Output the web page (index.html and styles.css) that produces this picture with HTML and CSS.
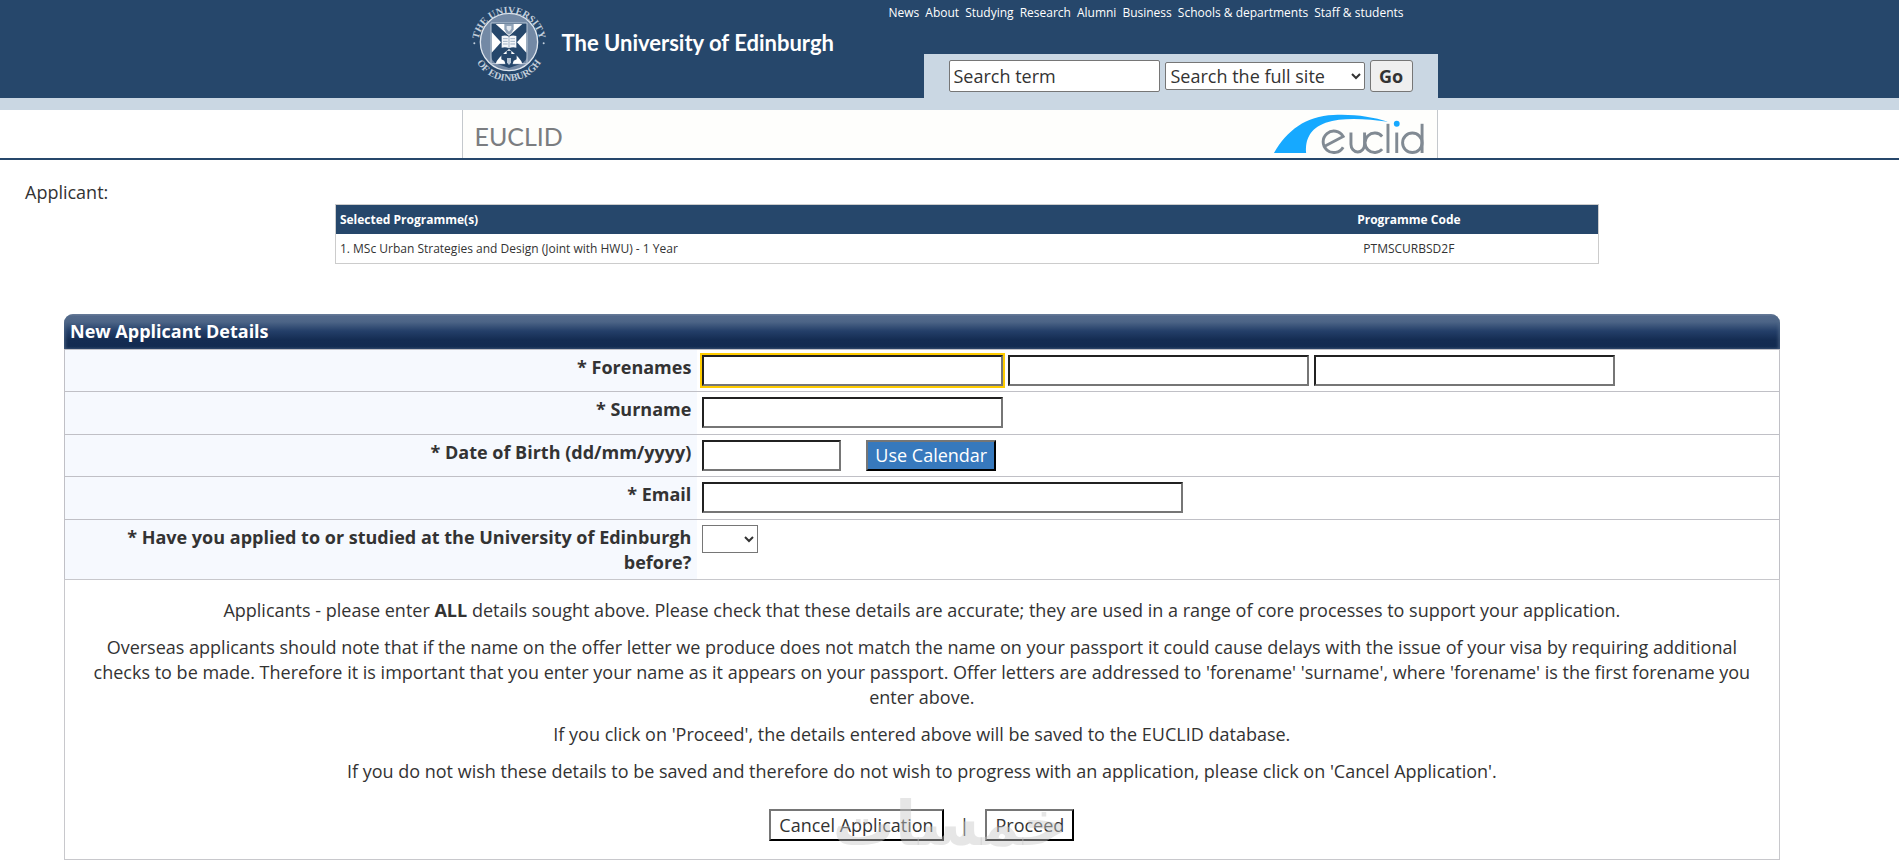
FILE: index.html
```html
<!DOCTYPE html>
<html lang="en">
<head>
    <meta charset="UTF-8">
    <meta name="viewport" content="width=device-width, initial-scale=1.0">
    <title>EUCLID - New Applicant Details</title>
    <link rel="stylesheet" href="styles.css">
</head>
<body>
    <header class="masthead">
        <div class="wrap masthead-inner">
            <a class="brand" href="#">
                <svg class="crest" viewBox="0 0 240 240" role="img" aria-label="University crest">
                    <defs>
                        <path id="ring-top" d="M 28 126 A 92 92 0 1 1 212 126"/>
                        <path id="ring-bottom" d="M 9 126 A 111 111 0 0 0 231 126"/>
                    </defs>
                    <circle cx="120" cy="120" r="86" fill="#7389a5" stroke="#dfe6ee" stroke-width="4"/>
                    <path d="M66 63h108v95q0 20-18 27l-36 13-36-13q-18-7-18-27z" fill="#26476b"/>
                    <path d="M66 63h108M66 63v122M174 63v122M66 185h108" stroke="#b9c7d6" stroke-width="3" fill="none"/>
                    <path d="M80 66h80l-40 36z" fill="#fff"/>
                    <path d="M68 90v62l28-31z" fill="#fff"/>
                    <path d="M172 90v62l-28-31z" fill="#fff"/>
                    <path d="M80 185q4-16 40-44 36 28 40 44z" fill="#fff"/>
                    <path d="M106 66h28v16q-4 12-14 16-10-4-14-16z" fill="#8fa2b8"/>
                    <path d="M113 72h14v9l-7 8-7-8z" fill="#dfe6ee"/>
                    <path d="M98 102q12-4 22 2 10-6 22-2v35q-12-4-22 2-10-6-22-2z" fill="#f4f6f9"/>
                    <path d="M102 110h14M102 118h14M102 126h14M124 110h14M124 118h14M124 126h14M120 104v34" stroke="#9fb0c3" stroke-width="3"/>
                    <path d="M113 146h14v10h16v16l-9 4-5 16h-18l-5-16-9-4v-16h16z" fill="#26476b"/>
                    <path d="M114 168h12v14l-6 7-6-7z" fill="#b9c7d6"/>
                    <circle cx="16" cy="124" r="3" fill="#c3cfdc"/>
                    <circle cx="224" cy="124" r="3" fill="#c3cfdc"/>
                    <text class="crest-text" text-anchor="middle"><textPath href="#ring-top" startOffset="50%">THE UNIVERSITY</textPath></text>
                    <text class="crest-text" text-anchor="middle"><textPath href="#ring-bottom" startOffset="50%">OF EDINBURGH</textPath></text>
                </svg>
                <span class="brand-name">The University of Edinburgh</span>
            </a>
            <div class="masthead-side">
                <nav class="top-nav" aria-label="University">
                    <a href="#">News</a>
                    <a href="#">About</a>
                    <a href="#">Studying</a>
                    <a href="#">Research</a>
                    <a href="#">Alumni</a>
                    <a href="#">Business</a>
                    <a href="#">Schools &amp; departments</a>
                    <a href="#">Staff &amp; students</a>
                </nav>
                <form class="search">
                    <input class="search-term" type="text" value="Search term" aria-label="Search term">
                    <select class="search-scope" aria-label="Search scope">
                        <option>Search the full site</option>
                    </select>
                    <button class="search-go" type="button">Go</button>
                </form>
            </div>
        </div>
    </header>

    <div class="site-bar">
        <div class="wrap site-bar-inner">
            <h1 class="site-title">EUCLID</h1>
            <svg class="euclid-logo" viewBox="0 0 156 42" role="img" aria-label="euclid">
                <path d="M1 40C14 17 34 2 62 1C84 0 102 3 118 8C96 5 72 3 54 9C38 15 33 26 34 40Z" fill="#16a9ff"/>
                <g fill="none" stroke="#818a93" stroke-width="3">
                    <path d="M53 33L72 23A11 11 0 1 0 72 34"/>
                    <path d="M80 19V31A7 8 0 0 0 94 31V19"/>
                    <path d="M112 23A10 10 0 1 0 112 36"/>
                    <path d="M118 10V40"/>
                    <path d="M127 19V40"/>
                    <circle cx="143" cy="29.500" r="10"/>
                    <path d="M153 10V40"/>
                </g>
                <circle cx="127" cy="10" r="3" fill="#16a9ff"/>
            </svg>
        </div>
    </div>

    <main class="content">
        <p class="applicant">Applicant:</p>

        <div class="panel">
            <table class="programmes">
                <thead>
                    <tr>
                        <th class="programme-name">Selected Programme(s)</th>
                        <th class="programme-code">Programme Code</th>
                    </tr>
                </thead>
                <tbody>
                    <tr>
                        <td class="programme-name">1. MSc Urban Strategies and Design (Joint with HWU) - 1 Year</td>
                        <td class="programme-code">PTMSCURBSD2F</td>
                    </tr>
                </tbody>
            </table>

            <form class="details">
                <h2 class="details-title">New Applicant Details</h2>
                <div class="row">
                    <label class="row-label" for="forename1">* Forenames</label>
                    <div class="row-fields">
                        <input class="field focused" type="text" id="forename1">
                        <input class="field" type="text" aria-label="Second forename">
                        <input class="field" type="text" aria-label="Third forename">
                    </div>
                </div>
                <div class="row">
                    <label class="row-label" for="surname">* Surname</label>
                    <div class="row-fields">
                        <input class="field" type="text" id="surname">
                    </div>
                </div>
                <div class="row">
                    <label class="row-label" for="dob">* Date of Birth (dd/mm/yyyy)</label>
                    <div class="row-fields">
                        <input class="field field-date" type="text" id="dob">
                        <button class="calendar" type="button">Use Calendar</button>
                    </div>
                </div>
                <div class="row">
                    <label class="row-label" for="email">* Email</label>
                    <div class="row-fields">
                        <input class="field field-email" type="text" id="email">
                    </div>
                </div>
                <div class="row">
                    <label class="row-label" for="before">* Have you applied to or studied at the University of Edinburgh before?</label>
                    <div class="row-fields">
                        <select class="before" id="before">
                            <option></option>
                            <option>Yes</option>
                            <option>No</option>
                        </select>
                    </div>
                </div>

                <div class="notes">
                    <p>Applicants - please enter <b>ALL</b> details sought above. Please check that these details are accurate; they are used in a range of core processes to support your application.</p>
                    <p>Overseas applicants should note that if the name on the offer letter we produce does not match the name on your passport it could cause delays with the issue of your visa by requiring additional checks to be made. Therefore it is important that you enter your name as it appears on your passport. Offer letters are addressed to 'forename' 'surname', where 'forename' is the first forename you enter above.</p>
                    <p>If you click on 'Proceed', the details entered above will be saved to the EUCLID database.</p>
                    <p>If you do not wish these details to be saved and therefore do not wish to progress with an application, please click on 'Cancel Application'.</p>
                    <div class="actions">
                        <button class="action" type="button">Cancel Application</button>
                        <span>|</span>
                        <button class="action" type="button">Proceed</button>
                        <span class="watermark" lang="ar" dir="rtl">خمسات</span>
                    </div>
                </div>
            </form>
        </div>
    </main>
</body>
</html>
```

FILE: styles.css
```css
/* General Styles */
* {
    box-sizing: border-box;
}

body {
    margin: 0;
    background: #ffffff;
    color: #333333;
    font-family: 'Open Sans', 'Noto Sans', sans-serif;
    font-size: 18px;
    line-height: 25px;
}

input,
select,
button {
    font: inherit;
    color: inherit;
    margin: 0;
}

.wrap {
    width: 100%;
    max-width: 976px;
    margin: 0 auto;
}

/* Masthead */
.masthead {
    background: #26476b;
    border-bottom: 12px solid #cad7e3;
}

.masthead-inner {
    display: flex;
    justify-content: space-between;
    min-height: 98px;
}

.brand {
    display: flex;
    align-items: center;
    align-self: flex-start;
    gap: 13px;
    padding: 2px 0 0 7px;
    color: #ffffff;
    text-decoration: none;
}

.crest {
    width: 80px;
    height: 80px;
}

.crest-text {
    fill: #c3cfdc;
    font-family: 'Liberation Serif', serif;
    font-size: 30px;
    font-weight: bold;
}

.brand-name {
    font-family: 'Lato', sans-serif;
    font-size: 22px;
    font-weight: bold;
}

.masthead-side {
    display: flex;
    flex-direction: column;
    justify-content: space-between;
    align-items: flex-end;
}

.top-nav {
    display: flex;
    gap: 6px;
    padding: 4px 34px 0 0;
    font-size: 12px;
    line-height: 18px;
}

.top-nav a {
    color: #ffffff;
    text-decoration: none;
}

/* Search */
.search {
    display: flex;
    align-items: center;
    gap: 5px;
    padding: 0 25px;
    height: 44px;
    background: #cad7e3;
}

.search-term {
    width: 211px;
    height: 32px;
    padding: 0 4px;
    border: 1px solid #767676;
    border-radius: 2px;
}

.search-scope {
    width: 200px;
    height: 28px;
    padding: 0 1px;
    background-color: #ffffff;
    border: 1px solid #767676;
    border-radius: 2px;
}

.search-go {
    width: 43px;
    height: 32px;
    padding: 0;
    font-weight: bold;
    background: #efefef;
    border: 1px solid #767676;
    border-radius: 3px;
}

/* Site bar */
.site-bar {
    border-bottom: 2px solid #26476b;
}

.site-bar-inner {
    display: flex;
    justify-content: space-between;
    align-items: center;
    height: 48px;
    padding: 0 12px;
    background: #fefefc;
    border-left: 1px solid #c4c8cc;
    border-right: 1px solid #c4c8cc;
}

.site-title {
    margin: 4px 0 0;
    color: #7b7d80;
    font-family: 'Lato', sans-serif;
    font-size: 25px;
    font-weight: normal;
    line-height: 32px;
}

.euclid-logo {
    width: 152px;
    height: 41px;
}

/* Page content */
.content {
    padding: 20px 29px 6px 25px;
}

.applicant {
    margin: 0;
}

.panel {
    margin: -1px 0 0 39px;
}

/* Programme table */
.programmes {
    width: 70%;
    margin: 0 auto 50px;
    border: 1px solid #cccccc;
    border-collapse: collapse;
    font-size: 12px;
    line-height: 19px;
}

.programmes th {
    background: #26476b;
    color: #ffffff;
}

.programmes th,
.programmes td {
    padding: 5px 4px;
}

.programme-name {
    width: 70%;
    text-align: left;
}

.programme-code {
    width: 30%;
    text-align: center;
}

/* Applicant details */
.details {
    width: 95%;
}

.details-title {
    margin: 0;
    padding: 5px 6px;
    color: #ffffff;
    font-size: 18px;
    line-height: 25px;
    background: linear-gradient(to bottom, #7c8ca6 0, #546a8b 2px, #4c6486 8px, #243f69 17px, #142c52 26px, #122a50 100%);
    box-shadow: inset 2px 0 3px rgba(84, 106, 139, 0.6), inset -2px 0 3px rgba(84, 106, 139, 0.6);
    border-radius: 9px 9px 0 0;
}

.row {
    display: flex;
    border: 1px solid #c0c0c6;
    border-bottom: none;
}

.row-label {
    width: 36.9%;
    padding: 5px 6px 4px 60px;
    background: #f6f9fe;
    font-weight: bold;
    text-align: right;
}

.row-fields {
    display: flex;
    flex: 1;
    align-items: flex-start;
    gap: 5px;
    padding: 5px;
}

.row:nth-of-type(even) .row-fields {
    padding-bottom: 6px;
}

.field {
    width: 301px;
    height: 31px;
    padding: 0 4px;
    background: #ffffff;
    border: 2px inset #767676;
}

.focused {
    outline: 2px solid #ffcc00;
}

.field-date {
    width: 139px;
}

.field-email {
    width: 481px;
}

.calendar {
    height: 31px;
    margin-left: 20px;
    padding: 0 7px;
    background: #3779bd;
    color: #ffffff;
    border: 2px outset #222222;
}

.before {
    width: 56px;
    height: 28px;
    background-color: #ffffff;
    border: 1px solid #767676;
}

/* Notes */
.notes {
    padding: 18px 20px;
    border: 1px solid #c8c8cc;
    text-align: center;
}

.notes p {
    margin: 0 0 12px;
}

.actions {
    position: relative;
    display: flex;
    justify-content: center;
    align-items: center;
    gap: 16px;
    margin-top: 25px;
}

.action {
    height: 32px;
    padding: 0 8px;
    background: #ffffff;
    border: 2px outset #222222;
}

.watermark {
    position: absolute;
    left: 50%;
    top: 50%;
    transform: translate(-38%, -52%);
    color: rgba(200, 200, 200, 0.45);
    font-family: 'DejaVu Sans', sans-serif;
    font-size: 62px;
    font-weight: bold;
    line-height: 62px;
    pointer-events: none;
}
```
